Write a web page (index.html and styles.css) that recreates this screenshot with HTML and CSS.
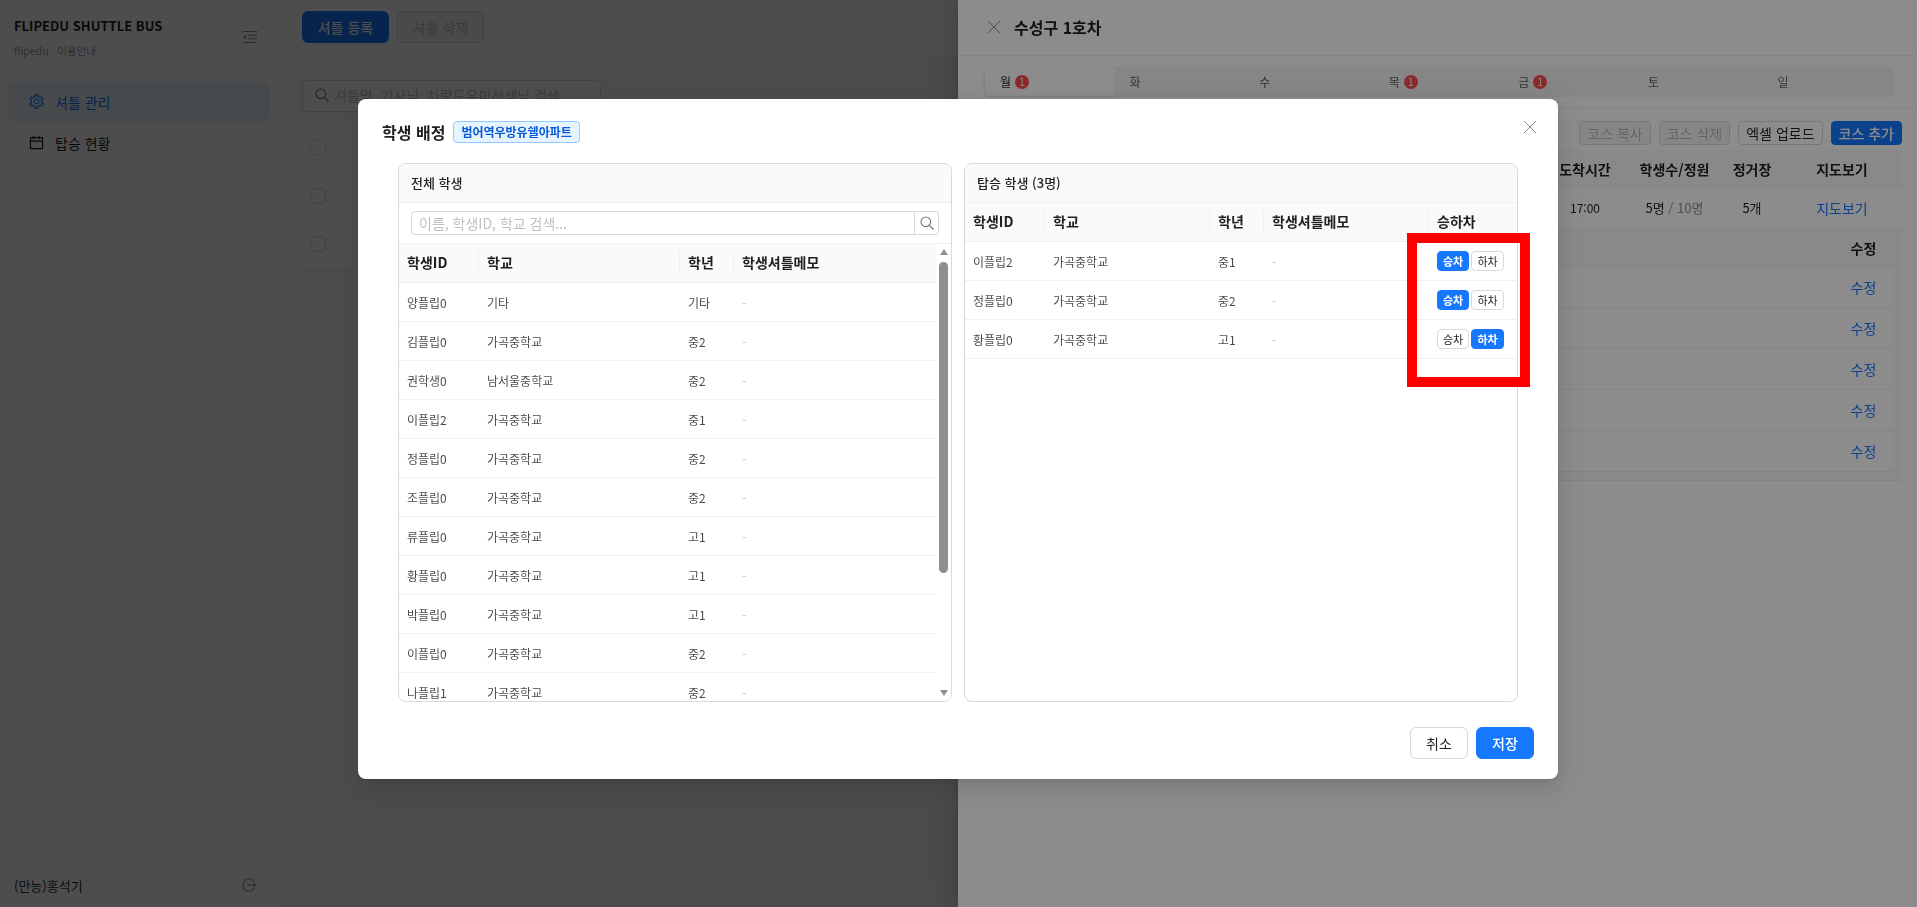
FILE: index.html
```html
<!DOCTYPE html>
<html lang="ko">
<head>
<meta charset="utf-8">
<title>FLIPEDU SHUTTLE BUS</title>
<link rel="stylesheet" href="styles.css">
</head>
<body>
<div class="app">
  <aside class="sidebar">
    <div class="brand">
      <div class="brand-text">
        <div class="brand-title">FLIPEDU SHUTTLE BUS</div>
        <div class="brand-sub">flipedu · 이용안내</div>
      </div>
      <svg class="fold-icon" viewBox="0 0 14 12" width="14" height="12"><path d="M0 .5h14M5 4.2h9M5 7.8h9M0 11.5h14" stroke="currentColor" fill="none"/><path d="M0 6l3-2.2v4.4z" fill="currentColor"/></svg>
    </div>
    <nav class="menu">
      <a class="menu-item selected">
        <svg class="menu-icon" viewBox="0 0 1024 1024" width="17" height="17"><path fill="currentColor" d="M924.8 625.7l-65.5-56c3.1-19 4.7-38.4 4.7-57.8s-1.6-38.8-4.7-57.8l65.5-56a32.03 32.03 0 0 0 9.3-35.2l-.9-2.6a443.74 443.74 0 0 0-79.7-137.9l-1.8-2.1a32.12 32.12 0 0 0-35.1-9.5l-81.3 28.9c-30-24.6-63.5-44-99.7-57.6l-15.7-85a32.05 32.05 0 0 0-25.8-25.7l-2.7-.5c-52.1-9.4-106.9-9.4-159 0l-2.7.5a32.05 32.05 0 0 0-25.8 25.7l-15.8 85.4a351.86 351.86 0 0 0-99 57.4l-81.9-29.1a32 32 0 0 0-35.1 9.5l-1.8 2.1a446.02 446.02 0 0 0-79.7 137.9l-.9 2.6c-4.5 12.5-.8 26.5 9.3 35.2l66.3 56.6c-3.1 18.8-4.6 38-4.6 57.1 0 19.2 1.5 38.4 4.6 57.1L99 625.5a32.03 32.03 0 0 0-9.3 35.2l.9 2.6c18.1 50.4 44.9 96.9 79.7 137.9l1.8 2.1a32.12 32.12 0 0 0 35.1 9.5l81.9-29.1c29.8 24.5 63.1 43.9 99 57.4l15.8 85.4a32.05 32.05 0 0 0 25.8 25.7l2.7.5a449.4 449.4 0 0 0 159 0l2.7-.5a32.05 32.05 0 0 0 25.8-25.7l15.7-85a350 350 0 0 0 99.7-57.6l81.3 28.9a32 32 0 0 0 35.1-9.5l1.8-2.1c34.8-41.1 61.6-87.5 79.7-137.9l.9-2.6c4.5-12.3.8-26.3-9.3-35zM788.3 465.9c2.5 15.1 3.8 30.6 3.8 46.1s-1.3 31-3.8 46.1l-6.6 40.1 74.7 63.9a370.03 370.03 0 0 1-42.6 73.6L721 702.8l-31.4 25.8c-23.9 19.6-50.5 35-79.3 45.8l-38.1 14.3-17.9 97a377.5 377.5 0 0 1-85 0l-17.9-97.2-37.8-14.5c-28.5-10.8-55-26.2-78.7-45.7l-31.4-25.9-93.4 33.2c-17-22.9-31.2-47.6-42.6-73.6l75.5-64.5-6.5-40c-2.4-14.9-3.7-30.3-3.7-45.5 0-15.3 1.2-30.6 3.7-45.5l6.5-40-75.5-64.5c11.3-26.1 25.6-50.7 42.6-73.6l93.4 33.2 31.4-25.9c23.7-19.5 50.2-34.9 78.7-45.7l37.9-14.3 17.9-97.2c28.1-3.2 56.8-3.2 85 0l17.9 97 38.1 14.3c28.7 10.8 55.4 26.2 79.3 45.8l31.4 25.8 92.8-32.9c17 22.9 31.2 47.6 42.6 73.6L781.8 426l6.5 39.9zM512 326c-97.2 0-176 78.8-176 176s78.8 176 176 176 176-78.8 176-176-78.8-176-176-176zm79.2 255.2A111.6 111.6 0 0 1 512 614c-29.9 0-58-11.7-79.2-32.8A111.6 111.6 0 0 1 400 502c0-29.9 11.7-58 32.8-79.2C454 401.6 482.1 390 512 390c29.9 0 58 11.6 79.2 32.8A111.6 111.6 0 0 1 624 502c0 29.9-11.7 58-32.8 79.2z"/></svg>
        <span>셔틀 관리</span>
      </a>
      <a class="menu-item">
        <svg class="menu-icon" viewBox="0 0 1024 1024" width="17" height="17"><path fill="currentColor" d="M880 184H712v-64c0-4.4-3.6-8-8-8h-56c-4.4 0-8 3.6-8 8v64H384v-64c0-4.4-3.6-8-8-8h-56c-4.4 0-8 3.6-8 8v64H144c-17.7 0-32 14.3-32 32v664c0 17.7 14.3 32 32 32h736c17.7 0 32-14.3 32-32V216c0-17.7-14.3-32-32-32zm-40 656H184V460h656v380zM184 392V256h128v48c0 4.4 3.6 8 8 8h56c4.4 0 8-3.6 8-8v-48h256v48c0 4.4 3.6 8 8 8h56c4.4 0 8-3.6 8-8v-48h128v136H184z"/></svg>
        <span>탑승 현황</span>
      </a>
    </nav>
    <div class="user-bar">
      <span>(만능)홍석기</span>
      <svg class="logout-icon" viewBox="0 0 14 14" width="14" height="14"><path d="M12.6 4.2A6.2 6.2 0 1 0 12.6 9.8" fill="none" stroke="currentColor" stroke-width="1.1"/><path d="M5.5 7h8M11.5 5.2L13.5 7l-2 1.8" fill="none" stroke="currentColor" stroke-width="1.1"/></svg>
    </div>
  </aside>
  <main class="main">
    <div class="toolbar">
      <button class="btn btn-primary btn-lg">셔틀 등록</button>
      <button class="btn btn-disabled btn-lg">셔틀 삭제</button>
    </div>
    <div class="content">
      <div class="search-box">
        <svg viewBox="0 0 14 14" width="14" height="14"><circle cx="5.8" cy="5.8" r="4.8" fill="none" stroke="currentColor" stroke-width="1.1"/><path d="M9.3 9.3l4.2 4.2" stroke="currentColor" stroke-width="1.2"/></svg>
        <span>셔틀명, 기사님, 차량도우미선생님 검색</span>
      </div>
      <div class="bus-table">
        <div class="bus-row bus-head"><span class="checkbox"></span></div>
        <div class="bus-row"><span class="checkbox"></span></div>
        <div class="bus-row"><span class="checkbox"></span></div>
      </div>
    </div>
  </main>
</div>

<div class="mask"></div>
<section class="drawer">
  <header class="drawer-head">
    <svg class="drawer-close" viewBox="0 0 14 14" width="14" height="14"><path d="M1 1l12 12M13 1L1 13" stroke="currentColor" fill="none"/></svg>
    <h2>수성구 1호차</h2>
  </header>
  <div class="tabs-wrap">
    <div class="tabs">
      <div class="tab active">월<span class="badge">1</span></div>
      <div class="tab">화</div>
      <div class="tab">수</div>
      <div class="tab">목<span class="badge">1</span></div>
      <div class="tab">금<span class="badge">1</span></div>
      <div class="tab">토</div>
      <div class="tab">일</div>
    </div>
  </div>
  <div class="drawer-body">
    <div class="course-actions">
      <button class="btn btn-disabled btn-sm">코스 복사</button>
      <button class="btn btn-disabled btn-sm">코스 삭제</button>
      <button class="btn btn-sm">엑셀 업로드</button>
      <button class="btn btn-primary btn-sm">코스 추가</button>
    </div>
    <div class="course-row course-head">
      <div></div><div class="cell sep">도착시간</div><div class="cell sep">학생수/정원</div><div class="cell sep">정거장</div><div class="cell">지도보기</div>
    </div>
    <div class="course-row course-data">
      <div></div><div class="cell time">17:00</div><div class="cell">5명 <span class="muted">/ 10명</span></div><div class="cell">5개</div><div class="cell link">지도보기</div>
    </div>
    <div class="expanded">
      <div class="stop-row stop-head"><div></div><div class="cell stop-edit">수정</div></div>
      <div class="stop-row"><div></div><div class="cell link">수정</div></div>
      <div class="stop-row"><div></div><div class="cell link">수정</div></div>
      <div class="stop-row"><div></div><div class="cell link">수정</div></div>
      <div class="stop-row"><div></div><div class="cell link">수정</div></div>
      <div class="stop-row"><div></div><div class="cell link">수정</div></div>
    </div>
  </div>
</section>

<div class="mask modal-wrap">
  <section class="modal">
    <header class="modal-head">
      <h3>학생 배정</h3>
      <span class="tag">범어역우방유쉘아파트</span>
      <svg class="modal-close" viewBox="0 0 14 14" width="14" height="14"><path d="M1 1l12 12M13 1L1 13" stroke="currentColor" fill="none"/></svg>
    </header>
    <div class="panels">
      <div class="panel">
        <div class="panel-title">전체 학생</div>
        <div class="panel-search">
          <div class="search-input">이름, 학생ID, 학교 검색...</div>
          <div class="search-btn"><svg viewBox="0 0 14 14" width="14" height="14"><circle cx="5.8" cy="5.8" r="4.8" fill="none" stroke="currentColor" stroke-width="1.1"/><path d="M9.3 9.3l4.2 4.2" stroke="currentColor" stroke-width="1.2"/></svg></div>
        </div>
        <div class="list-body">
          <div class="list-clip">
            <div class="row all-cols head"><div>학생ID</div><div>학교</div><div>학년</div><div>학생셔틀메모</div></div>
            <div class="row all-cols"><div>양플립0</div><div>기타</div><div>기타</div><div class="dash">-</div></div>
            <div class="row all-cols"><div>김플립0</div><div>가곡중학교</div><div>중2</div><div class="dash">-</div></div>
            <div class="row all-cols"><div>권학생0</div><div>남서울중학교</div><div>중2</div><div class="dash">-</div></div>
            <div class="row all-cols"><div>이플립2</div><div>가곡중학교</div><div>중1</div><div class="dash">-</div></div>
            <div class="row all-cols"><div>정플립0</div><div>가곡중학교</div><div>중2</div><div class="dash">-</div></div>
            <div class="row all-cols"><div>조플립0</div><div>가곡중학교</div><div>중2</div><div class="dash">-</div></div>
            <div class="row all-cols"><div>류플립0</div><div>가곡중학교</div><div>고1</div><div class="dash">-</div></div>
            <div class="row all-cols"><div>황플립0</div><div>가곡중학교</div><div>고1</div><div class="dash">-</div></div>
            <div class="row all-cols"><div>박플립0</div><div>가곡중학교</div><div>고1</div><div class="dash">-</div></div>
            <div class="row all-cols"><div>이플립0</div><div>가곡중학교</div><div>중2</div><div class="dash">-</div></div>
            <div class="row all-cols"><div>나플립1</div><div>가곡중학교</div><div>중2</div><div class="dash">-</div></div>
          </div>
          <div class="scrollbar">
            <span class="arrow-up"></span>
            <span class="thumb"></span>
            <span class="arrow-down"></span>
          </div>
        </div>
      </div>
      <div class="panel">
        <div class="panel-title">탑승 학생 (3명)</div>
        <div class="row ride-cols head"><div>학생ID</div><div>학교</div><div>학년</div><div>학생셔틀메모</div><div>승하차</div></div>
        <div class="row ride-cols"><div>이플립2</div><div>가곡중학교</div><div>중1</div><div class="dash">-</div><div class="toggle"><span class="chip on">승차</span><span class="chip">하차</span></div></div>
        <div class="row ride-cols"><div>정플립0</div><div>가곡중학교</div><div>중2</div><div class="dash">-</div><div class="toggle"><span class="chip on">승차</span><span class="chip">하차</span></div></div>
        <div class="row ride-cols"><div>황플립0</div><div>가곡중학교</div><div>고1</div><div class="dash">-</div><div class="toggle"><span class="chip">승차</span><span class="chip on">하차</span></div></div>
      </div>
    </div>
    <footer class="modal-foot">
      <button class="btn btn-foot">취소</button>
      <button class="btn btn-primary btn-foot">저장</button>
    </footer>
    <div class="annotation"></div>
  </section>
</div>
</body>
</html>
```

FILE: styles.css
```css
* { box-sizing: border-box; }
html, body { margin: 0; height: 100%; overflow: hidden; }
body {
  font-family: "Noto Sans CJK KR", "Noto Sans", sans-serif;
  font-size: 14px;
  color: rgba(0, 0, 0, .88);
  background: #fff;
}
h2, h3 { margin: 0; }

.app { display: flex; height: 100vh; }
.sidebar { width: 280px; flex: none; display: flex; flex-direction: column; background: #fff; border-right: 1px solid #f0f0f0; }
.brand { height: 76px; padding: 16px 22px 0 14px; display: flex; justify-content: space-between; border-bottom: 1px solid #f0f0f0; }
.brand-title { font-size: 13px; font-weight: 700; line-height: 20px; }
.brand-sub { font-size: 10.5px; line-height: 16px; margin-top: 7px; color: rgba(0, 0, 0, .45); }
.fold-icon { margin-top: 15px; color: rgba(0, 0, 0, .45); }
.menu { flex: 1; padding: 6px 9px 0 7px; display: flex; flex-direction: column; gap: 1px; }
.menu-item { height: 40px; padding: 0 0 1px 21px; display: flex; align-items: center; gap: 10px; border-radius: 8px; }
.menu-item.selected { background: #e6f4ff; color: #1677ff; }
.user-bar { height: 45px; border-top: 1px solid #f0f0f0; padding: 0 23px 0 14px; display: flex; align-items: center; justify-content: space-between; font-size: 13px; }
.logout-icon { color: rgba(0, 0, 0, .45); }

.main { flex: 1; min-width: 0; background: #f8f8f8; }
.toolbar { height: 56px; padding: 11px 22px; display: flex; gap: 8px; background: #fff; border-bottom: 1px solid #f0f0f0; }
.content { padding: 24px 22px; }
.search-box { width: 299px; height: 32px; padding: 0 12px 2px; display: flex; align-items: center; gap: 5px; background: #fff; border: 1px solid #d9d9d9; border-radius: 6px; color: #bfbfbf; }
.search-box svg { color: rgba(0, 0, 0, .55); }
.bus-table { margin-top: 10px; background: #fff; }
.bus-row { height: 48.5px; padding-left: 8px; display: flex; align-items: center; border-bottom: 1px solid #f0f0f0; }
.bus-head { background: #fafafa; height: 50px; }
.checkbox { width: 16px; height: 16px; background: #fff; border: 1px solid #d9d9d9; border-radius: 4px; }

.btn { font: inherit; height: 32px; padding: 0 15px; background: #fff; border: 1px solid #d9d9d9; border-radius: 6px; color: rgba(0, 0, 0, .88); }
.btn-primary { background: #1677ff; border-color: #1677ff; color: #fff; font-weight: 500; }
.btn-disabled { background: rgba(0, 0, 0, .04); color: rgba(0, 0, 0, .25); }
.btn-lg { width: 87px; padding: 0; }
.btn-sm { height: 24px; padding: 0 7px; border-radius: 4px; line-height: 20px; }
.btn-foot { width: 58px; padding: 0; }

.mask { position: fixed; inset: 0; background: rgba(0, 0, 0, .45); }

.drawer { position: fixed; top: 0; right: 0; bottom: 0; width: 959px; background: #fff; display: flex; flex-direction: column; box-shadow: -6px 0 16px rgba(0, 0, 0, .08), -3px 0 6px -4px rgba(0, 0, 0, .12), -9px 0 28px 8px rgba(0, 0, 0, .05); }
.drawer-head { height: 56px; padding: 0 0 2px 29px; display: flex; align-items: center; gap: 13px; border-bottom: 1px solid #f0f0f0; }
.drawer-head h2 { font-size: 16px; font-weight: 700; line-height: 24px; }
.drawer-close { color: rgba(0, 0, 0, .45); }
.tabs-wrap { padding: 11px 23px 11px 25px; border-bottom: 1px solid #f0f0f0; }
.tabs { height: 30px; padding: 1px 2px; display: flex; background: #f5f5f5; border-radius: 6px; }
.tab { flex: 1; padding: 0 0 1px 15px; display: flex; align-items: center; gap: 4px; font-size: 12px; color: rgba(0, 0, 0, .65); border-radius: 4px; }
.tab.active { background: #fff; box-shadow: 0 1px 2px rgba(0, 0, 0, .1); color: rgba(0, 0, 0, .88); }
.badge { width: 14px; height: 14px; border-radius: 50%; background: #ff4d4f; color: #fff; font-size: 10px; line-height: 14px; text-align: center; }
.drawer-body { padding: 12px 15px 0 25px; }
.course-actions { display: flex; justify-content: flex-end; gap: 8px; margin-bottom: 5px; }
.course-row { display: grid; grid-template-columns: 1fr 84px 95px 60px 120px; border-bottom: 1px solid #f0f0f0; height: 41px; align-items: center; }
.course-head { height: 38px; background: #fafafa; font-weight: 700; }
.course-data { font-size: 13px; }
.time { font-size: 12px; }
.cell { text-align: center; line-height: 22px; }
.sep { background: linear-gradient(#f0f0f0, #f0f0f0) no-repeat right center / 1px 22px; }
.muted { color: rgba(0, 0, 0, .45); }
.link { color: #1677ff; }
.course-data .link { font-size: 14px; }
.expanded { height: 252px; padding-right: 8px; background: #fafafa; border-bottom: 1px solid #f0f0f0; }
.stop-row { display: grid; grid-template-columns: 1fr 61px; height: 41px; align-items: center; background: #fff; border-bottom: 1px solid #f0f0f0; }
.stop-head { height: 38px; background: #fafafa; }
.stop-edit { font-weight: 700; background: linear-gradient(#f0f0f0, #f0f0f0) no-repeat left center / 1px 22px; }

.modal-wrap { padding: 99px 0 0 358px; }
.modal { position: relative; width: 1200px; height: 680px; padding: 22px 24px 20px; background: #fff; border-radius: 8px; box-shadow: 0 6px 16px rgba(0, 0, 0, .08), 0 3px 6px -4px rgba(0, 0, 0, .12), 0 9px 28px 8px rgba(0, 0, 0, .05); }
.modal-head { height: 22px; display: flex; align-items: center; gap: 8px; }
.modal-head h3 { font-size: 16px; font-weight: 700; line-height: 22px; }
.tag { height: 22px; padding: 0 7px; font-size: 12px; font-weight: 700; line-height: 20px; color: #0958d9; background: #e6f4ff; border: 1px solid #91caff; border-radius: 4px; }
.modal-close { margin-left: auto; margin-right: -3px; margin-top: -10px; color: rgba(0, 0, 0, .45); }
.panels { height: 539px; margin: 20px 16px 0; display: grid; grid-template-columns: 1fr 1fr; gap: 12px; }
.panel { min-width: 0; display: flex; flex-direction: column; border: 1px solid #d9d9d9; border-radius: 8px; overflow: hidden; }
.panel-title { height: 39px; flex: none; padding-left: 12px; font-size: 13px; font-weight: 500; line-height: 37px; background: #fafafa; border-bottom: 1px solid #f0f0f0; }
.panel-search { height: 41px; flex: none; padding: 8px 12px; display: flex; border-bottom: 1px solid #f0f0f0; }
.search-input { flex: 1; height: 24px; padding-left: 7px; line-height: 22px; color: #bfbfbf; border: 1px solid #d9d9d9; border-radius: 4px 0 0 4px; }
.search-btn { width: 24px; height: 24px; display: flex; align-items: center; justify-content: center; color: rgba(0, 0, 0, .55); border: 1px solid #d9d9d9; border-left: 0; border-radius: 0 4px 4px 0; }
.list-body { flex: 1; min-height: 0; display: flex; }
.list-clip { flex: 1; min-width: 0; overflow: hidden; }
.scrollbar { width: 15px; flex: none; padding: 5px 3px 5px; display: flex; flex-direction: column; align-items: center; background: #fff; }
.arrow-up, .arrow-down { width: 0; height: 0; border-left: 4.5px solid transparent; border-right: 4.5px solid transparent; }
.arrow-up { border-bottom: 6px solid #8f8f8f; }
.arrow-down { margin-top: auto; border-top: 6px solid #8f8f8f; }
.thumb { width: 9px; height: 311px; margin-top: 7px; background: #8f8f8f; border-radius: 5px; }

.row { display: grid; height: 39px; align-items: center; font-size: 12px; color: rgba(0, 0, 0, .72); border-bottom: 1px solid #f0f0f0; }
.row > div { padding-left: 8px; }
.all-cols { grid-template-columns: 80px 201px 54px 1fr; }
.ride-cols { grid-template-columns: 80px 165px 54px 165px 88px; }
.head { flex: none; height: 39px; padding-bottom: 2px; font-size: 14px; font-weight: 700; color: rgba(0, 0, 0, .88); background: #fafafa; }
.head > div { line-height: 22px; background: linear-gradient(#f0f0f0, #f0f0f0) no-repeat right center / 1px 22px; }
.head > div:last-child { background: none; }
.dash { color: rgba(0, 0, 0, .25); }
.toggle { display: flex; gap: 2px; }
.chip { width: 32px; height: 20px; font-size: 11px; line-height: 18px; text-align: center; color: rgba(0, 0, 0, .88); background: #fff; border: 1px solid #d9d9d9; border-radius: 4px; }
.chip + .chip { width: 33px; }
.chip.on { background: #1677ff; border-color: #1677ff; color: #fff; font-weight: 700; }

.modal-foot { margin-top: 25px; display: flex; justify-content: flex-end; gap: 8px; }
.annotation { position: absolute; left: 1049px; top: 134px; width: 123px; height: 154px; border: 10px solid #f00; }
```
